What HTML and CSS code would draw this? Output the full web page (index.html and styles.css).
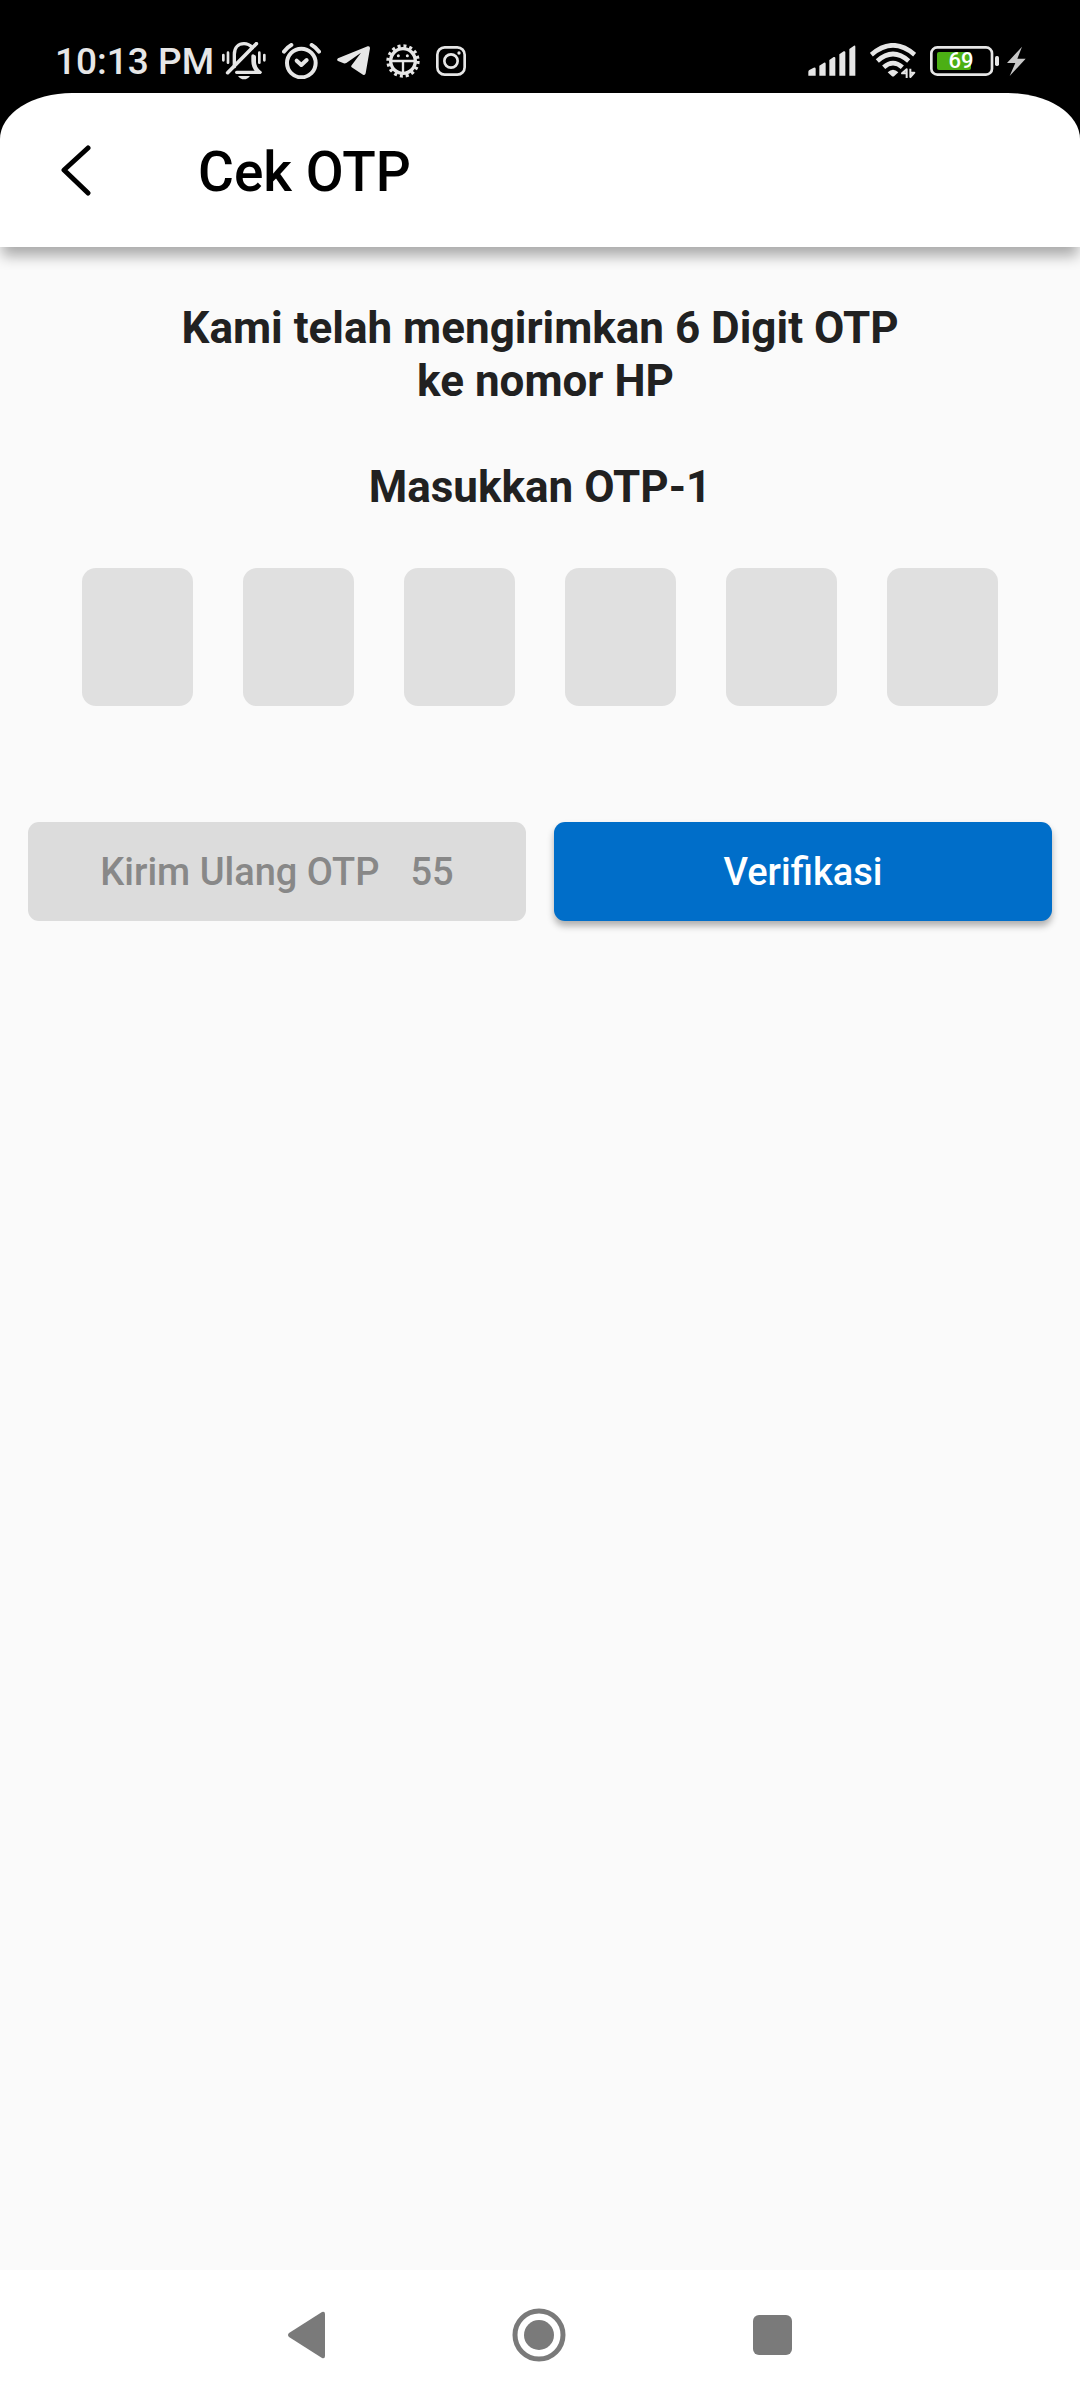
FILE: index.html
```html
<!DOCTYPE html>
<html lang="id">
<head>
<meta charset="utf-8">
<meta name="viewport" content="width=device-width, initial-scale=1">
<title>Cek OTP</title>
<link rel="stylesheet" href="styles.css">
</head>
<body>
<div class="status-bar">
  <div class="status-group">
    <span class="clock">10:13 PM</span>
    <svg class="icon-bell" viewBox="0 0 132 114" fill="none" stroke="currentColor" stroke-width="10" stroke-linecap="round" stroke-linejoin="round">
      <path d="M37 74V37C37 16 50 5 66 5c10 0 18 4 25 12"/>
      <path d="M97 44v16c0 12 6 22 16 31"/>
      <path d="M93 42V58c0 14 6 24 14 31"/>
      <path d="M44 91H114"/>
      <path d="M17 92 103 5" stroke-width="11"/>
      <path d="M48 102h36c-5 7-11 10-18 10s-13-3-18-10z" fill="currentColor" stroke="none"/>
      <path d="M4 39V55M18 32V62M112 32V62M127 39V55" stroke-width="8"/>
    </svg>
    <svg class="icon-alarm" viewBox="0 0 117 108" fill="none" stroke="currentColor" stroke-width="12" stroke-linecap="round" stroke-linejoin="round">
      <circle cx="58" cy="60" r="43"/>
      <path d="M44 53 58 66 74 51"/>
      <path d="M6 26Q15 13 28 6M111 26Q102 13 89 6"/>
    </svg>
    <svg class="icon-plane" viewBox="0 0 99 90" fill="currentColor">
      <path d="M3 37 92 1q7-2 7 6L86 82q-2 7-8 4L44 64q-3-3 0-6L72 20 28 51q-4 2-8 1L3 45q-5-4 0-8z"/>
    </svg>
    <svg class="icon-gear" viewBox="0 0 102 102" fill="none" stroke="currentColor">
      <circle cx="51" cy="51" r="45" stroke-width="10" stroke-dasharray="9 8.67"/>
      <circle cx="51" cy="51" r="37" stroke-width="10"/>
      <path d="M14 51H88M51 51V90" stroke-width="7"/>
      <path d="M37 35h.1M64 35h.1" stroke-width="9" stroke-linecap="round"/>
    </svg>
    <svg class="icon-camera" viewBox="0 0 90 90" fill="none" stroke="currentColor" stroke-width="8">
      <rect x="4" y="4" width="82" height="82" rx="22"/>
      <circle cx="45" cy="45" r="20"/>
      <circle cx="69" cy="21" r="5" fill="currentColor" stroke="none"/>
    </svg>
  </div>
  <div class="status-group">
    <svg class="icon-signal" viewBox="0 0 144 93" fill="currentColor">
      <path d="M1 80Q1 77 4 75L17 68Q23 67 23 71V92H1zM34 62 48 53Q53 52 53 56V92H34zM64 45 77 36Q82 35 82 39V92H64zM94 28 107 19Q112 18 112 22V92H94zM124 12 138 2Q142 0 142 5V92H124z"/>
    </svg>
    <svg class="icon-wifi" viewBox="0 0 138 108" fill="none" stroke="currentColor" stroke-width="14">
      <path d="M4 35Q69-21 134 35"/>
      <path d="M22 54Q69 12 116 54"/>
      <path d="M41 73Q69 48 97 73"/>
      <path d="M53 88Q69 73 85 88L73 99Q69 102 65 99z" fill="currentColor" stroke="none"/>
      <path d="M110 105V79L96 91h14M121 77V102L133 89h-12" stroke-width="6" stroke-linejoin="round"/>
    </svg>
    <div class="power">
      <div class="battery">
        <svg class="icon-battery" viewBox="0 0 210 90">
          <rect x="21" y="18" width="102" height="54" rx="6" fill="#4caf14"/>
          <rect x="4" y="4" width="182" height="82" rx="18" fill="none" stroke="currentColor" stroke-width="8"/>
          <rect x="195" y="30" width="12" height="30" rx="5" fill="currentColor"/>
        </svg>
        <span class="battery-level">69</span>
      </div>
      <svg class="icon-bolt" viewBox="0 0 57 90" fill="currentColor"><path d="M45 2 0 51H25L8 90 56 38H31z"/></svg>
    </div>
  </div>
</div>
<div class="header-back">
  <header class="app-bar">
    <button class="back" type="button" aria-label="Kembali">
      <svg viewBox="0 0 30 52" fill="none" stroke="currentColor" stroke-width="5" stroke-linecap="round" stroke-linejoin="round"><path d="M27 4 3 26 27 49"/></svg>
    </button>
    <h1 class="title">Cek OTP</h1>
  </header>
</div>
<main class="content">
  <p class="message">Kami telah mengirimkan 6 Digit OTP
 ke nomor HP

Masukkan OTP-1</p>
  <form class="otp-form">
    <div class="digits">
      <input class="digit" type="text" inputmode="numeric" maxlength="1" aria-label="Digit 1">
      <input class="digit" type="text" inputmode="numeric" maxlength="1" aria-label="Digit 2">
      <input class="digit" type="text" inputmode="numeric" maxlength="1" aria-label="Digit 3">
      <input class="digit" type="text" inputmode="numeric" maxlength="1" aria-label="Digit 4">
      <input class="digit" type="text" inputmode="numeric" maxlength="1" aria-label="Digit 5">
      <input class="digit" type="text" inputmode="numeric" maxlength="1" aria-label="Digit 6">
    </div>
    <div class="actions">
      <button class="action resend" type="button" disabled><span>Kirim Ulang OTP</span><span>55</span></button>
      <button class="action verify" type="submit">Verifikasi</button>
    </div>
  </form>
</main>
<nav class="nav-bar">
  <button class="nav-button" type="button" aria-label="Back"><svg viewBox="0 0 54 54" fill="currentColor"><path d="M10 25 43 4Q46 3 46 6V48Q46 51 43 50L10 29Q8 27 10 25z"/></svg></button>
  <button class="nav-button" type="button" aria-label="Home"><svg viewBox="0 0 54 54"><circle cx="27" cy="27" r="24" fill="none" stroke="currentColor" stroke-width="5"/><circle cx="27" cy="27" r="15" fill="currentColor"/></svg></button>
  <button class="nav-button" type="button" aria-label="Recent"><svg viewBox="0 0 54 54" fill="currentColor"><rect x="8" y="7" width="39" height="40" rx="6"/></svg></button>
</nav>
</body>
</html>
```
FILE: styles.css
```css
* {
  box-sizing: border-box;
}

body {
  margin: 0;
  min-height: 100vh;
  display: flex;
  flex-direction: column;
  background: #fafafa;
  color: #212121;
  font-family: Roboto, sans-serif;
}

button {
  border: 0;
  padding: 0;
  font-family: inherit;
}

svg {
  display: block;
}

.status-bar {
  display: flex;
  justify-content: space-between;
  align-items: center;
  height: 93px;
  padding: 28px 54px 0 55px;
  background: #000;
  color: #e6e6e6;
}

.status-group {
  display: flex;
  align-items: center;
  gap: 16px;
}

.status-group:last-child {
  gap: 14px;
}

.clock {
  margin-right: -8px;
  padding-top: 3px;
  font-size: 37px;
  font-weight: 500;
  line-height: 44px;
}

.icon-bell { width: 44px; height: 38px; }
.icon-alarm { width: 39px; height: 36px; }
.icon-plane { width: 33px; height: 30px; }
.icon-gear { width: 34px; height: 34px; }
.icon-camera { width: 30px; height: 30px; }
.icon-signal { width: 48px; height: 31px; }
.icon-wifi { width: 46px; height: 36px; }
.icon-battery { width: 70px; height: 30px; }
.icon-bolt { width: 19px; height: 30px; color: #c8c8c8; }

.power {
  display: flex;
  align-items: center;
  gap: 7px;
}

.battery {
  display: grid;
  align-items: center;
}

.battery > * {
  grid-area: 1 / 1;
}

.battery-level {
  padding-right: 8px;
  color: #fff;
  font-size: 22px;
  font-weight: 500;
  line-height: 30px;
  text-align: center;
}

.header-back {
  background: linear-gradient(#000 60px, transparent 60px);
}

.app-bar {
  display: flex;
  align-items: center;
  height: 154px;
  padding: 0 61px;
  background: #fff;
  border-radius: 72px 72px 0 0 / 46px 46px 0 0;
  box-shadow: 0 11px 14px -2px rgba(0, 0, 0, 0.32);
}

.back {
  width: 137px;
  background: none;
  color: #000;
}

.back svg {
  width: 30px;
  height: 52px;
}

.title {
  margin: 0;
  padding-top: 3px;
  color: #000;
  font-size: 55px;
  font-weight: 500;
  line-height: 64px;
}

.content {
  flex: 1;
  padding: 55px 28px;
}

.message {
  margin: 0;
  font-size: 44px;
  font-weight: 700;
  line-height: 53px;
  text-align: center;
  white-space: pre;
}

.digits {
  display: flex;
  justify-content: space-between;
  padding: 54px 54px 0;
}

.digit {
  width: 111px;
  height: 138px;
  border: 0;
  border-radius: 14px;
  background: #e0e0e0;
  color: inherit;
  font: 500 55px Roboto, sans-serif;
  text-align: center;
}

.actions {
  display: grid;
  grid-template-columns: 1fr 1fr;
  gap: 28px;
  margin-top: 116px;
}

.action {
  display: flex;
  justify-content: center;
  align-items: center;
  gap: 31px;
  height: 99px;
  border-radius: 11px;
  font-size: 38px;
  font-weight: 500;
}

.resend {
  background: #dcdcdc;
  color: #888;
}

.verify {
  background: #006ec9;
  color: #fff;
  box-shadow: 0 5px 7px rgba(0, 0, 0, 0.3);
}

.nav-bar {
  display: flex;
  justify-content: center;
  align-items: center;
  gap: 179px;
  height: 130px;
  padding-right: 2px;
  background: #fff;
}

.nav-button {
  background: none;
  color: #7a7a7a;
}

.nav-button svg {
  width: 54px;
  height: 54px;
}
```
